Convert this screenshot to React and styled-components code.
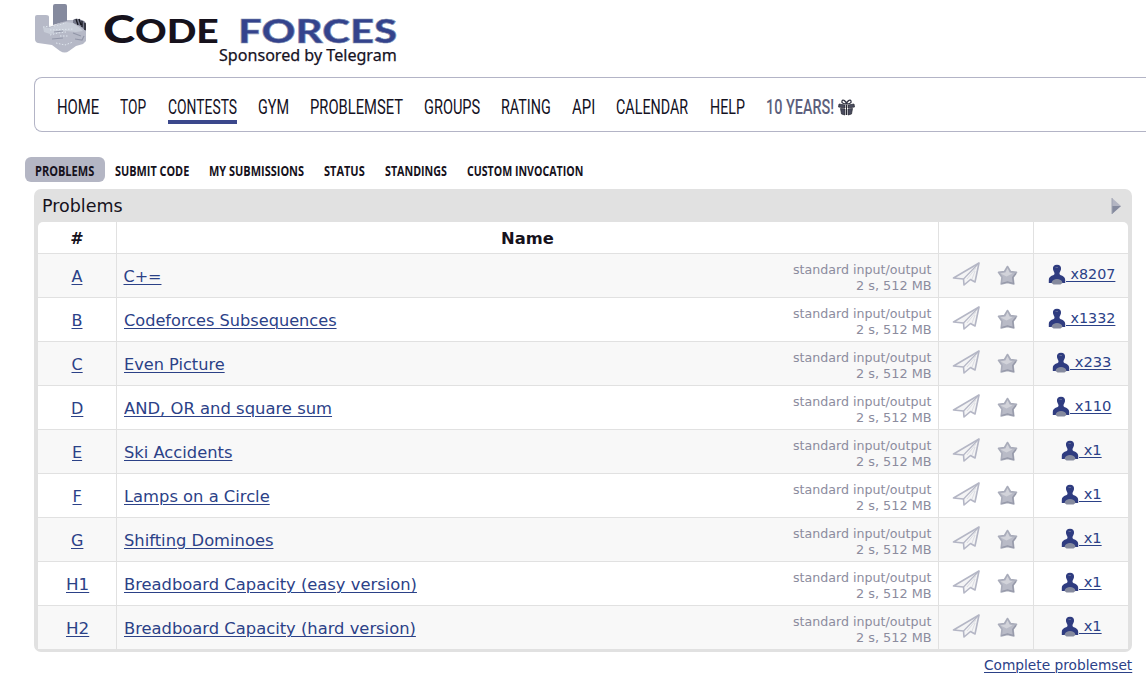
import React, { useLayoutEffect, useRef, useState } from "react";
import styled, { createGlobalStyle } from "styled-components";

const Global = createGlobalStyle`
  * { box-sizing: border-box; }
  body { margin: 0; background: #fff; color: #16121c; overflow: hidden;
    font-family: "DejaVu Sans", sans-serif; }
`;

const FitBox = styled.span`
  display: inline-block;
  white-space: pre;
  text-align: left;
  text-decoration: inherit;
  flex: none;
`;
const FitInner = styled.span`
  display: inline-block;
  text-decoration: inherit;
  transform-origin: 0 50%;
`;

/* Narrows or widens its text so that it takes exactly the given width. */
function Fit({ width, children }) {
  const ref = useRef(null);
  const [scale, setScale] = useState(1);
  useLayoutEffect(() => {
    setScale(width / ref.current.offsetWidth);
  }, [width]);
  return (
    <FitBox style={{ width }}>
      <FitInner ref={ref} style={{ transform: `scaleX(${scale})` }}>{children}</FitInner>
    </FitBox>
  );
}

const Page = styled.div`
  width: 1146px;
  height: 682px;
  overflow: hidden;
`;
const Header = styled.header`
  display: flex;
  height: 77px;
  padding: 3px 0 0 34px;
`;
const Brand = styled.div`
  width: 294px;
  margin-left: 16px;
`;
const Wordmark = styled.div`
  display: flex;
  align-items: baseline;
  height: 43px;
  padding-top: 9px;
  font: 900 33px/32px Lato, sans-serif;
`;
const Initial = styled.span`
  display: flex;
  font-size: 38px;
`;
const Forces = styled.span`
  margin-left: 19px;
  color: #34438c;
  -webkit-text-stroke: 0.6px #8592b4;
`;
const Sponsor = styled.div`
  display: flex;
  justify-content: flex-end;
  font: 17px/18px "Noto Sans", sans-serif;
  -webkit-text-stroke: 0.25px #16122c;
`;
const Nav = styled.nav`
  display: flex;
  align-items: flex-start;
  height: 55px;
  margin-left: 34px;
  padding: 14px 0 0 22px;
  border: 1px solid #b3b4c6;
  border-right: 0;
  border-radius: 8px 0 0 8px;
`;
const NavItem = styled.a`
  display: flex;
  align-items: center;
  height: 32px;
  margin-right: ${(p) => p.$gap}px;
  padding-top: 3px;
  border-bottom: 4px solid ${(p) => (p.$active ? "#3b488c" : "transparent")};
  color: ${(p) => (p.$muted ? "#5c5f7c" : "#14121f")};
  font: ${(p) => (p.$muted ? 500 : 400)} 19.5px/26px Roboto, sans-serif;
`;
const SubNav = styled.nav`
  display: flex;
  height: 25px;
  margin: 25px 0 0 25px;
`;
const SubItem = styled.a`
  height: 25px;
  padding: 0 10px;
  border-radius: 6px;
  background: ${(p) => (p.$active ? "#b4b6c4" : "transparent")};
  font: 700 15px/27px "Open Sans", sans-serif;
`;
const Panel = styled.section`
  width: 1098px;
  margin: 7px 0 0 34px;
  padding: 0 4px 2px;
  border-radius: 7px;
  background: #e1e1e1;
`;
const PanelTitle = styled.div`
  display: flex;
  align-items: center;
  justify-content: space-between;
  height: 33px;
  padding: 0 6px 0 4px;
  font-size: 17.5px;
`;
const Table = styled.div`
  overflow: hidden;
  border-radius: 5px 5px 0 0;
`;
const Row = styled.div`
  display: grid;
  grid-template-columns: 78px 821px 94px 94px;
  column-gap: 1px;
  height: ${(p) => (p.$head ? 31 : 43)}px;
  margin-bottom: 1px;
`;
const Cell = styled.div`
  display: flex;
  align-items: center;
  justify-content: ${(p) => p.$justify || "center"};
  padding: ${(p) => p.$pad || "0"};
  background: ${(p) => (p.$shade ? "#f8f8f8" : "#fff")};
  font-size: 16px;
  font-weight: ${(p) => (p.$bold ? 700 : 400)};
`;
const Link = styled.a`
  color: #2b4187;
  font-size: ${(p) => p.$size || 16}px;
  text-decoration: underline;
  text-decoration-thickness: 1px;
  text-underline-offset: 2px;
`;
const Limits = styled.div`
  display: flex;
  flex-direction: column;
  align-items: flex-end;
  color: #8c8c9e;
  font-size: 13px;
  line-height: 16px;
  padding-top: 3px;
`;
const Actions = styled.div`
  display: flex;
  align-items: center;
  gap: 16px;
  padding-right: 3px;
`;
const Solved = styled.div`
  display: flex;
  align-items: center;
  height: 40px;
  margin-bottom: 3px;
`;
const Icon = styled.svg`
  display: block;
  flex: none;
  margin: ${(p) => p.$m || "0"};
`;
const Footer = styled.footer`
  display: flex;
  justify-content: flex-end;
  padding: 4px 14px 0 0;
  line-height: 18px;
`;

const Hand = () => (
  <Icon width="53" height="51" viewBox="0 0 53 51">
    <path d="M1 14q0-2 2-2h9q3 0 3 2v10l6-2 12-5 9 0 7 4 3 6v11l-3 3-7 2-7 5q-4 3-9 0L18 42 4 40q-3-1-3-4z" fill="#b6b9c7" />
    <path d="M19 3q0-2 2-2h10q2 0 2 2v15l-4 1-10 3z" fill="#858a9e" />
    <path d="M39 17q2-2 6-1l5 2q2 1 2 4v6l-6-5-7-3z" fill="#747789" />
    <path d="M42 16l2 6m1-6l2 6m1-4v6m3-4v7" stroke="#171720" strokeWidth="1.3" />
    <path d="M9 24l6 1 8-3 9-3 7 1 7 5 3 3-7 1-10-1-9 2-7 1-6-2z" fill="#c8cdd8" />
    <path d="M20 29l9-1M18 36l11-1m10-5l8 3m-6 3l7 1 2-4" fill="none" stroke="#9296a8" strokeWidth="1.2" />
    <path d="M9 24l8-1m-1 9l8-2 8-1m-6 4h9m-13 7l9 2 8-3m-19-16l12-3m-16 7l24-1" fill="none" stroke="#dfe6ee" strokeDasharray="1.500 1.500" />
  </Icon>
);
const Gift = () => (
  <Icon width="17" height="17" viewBox="0 0 17 17" $m="0 0 1px 4px">
    <path d="M8.500 5C6 5 3 4 4 2s4 0 4.500 3C9 2 12 0 13 2s-2 3-4.500 3z" fill="none" stroke="#353746" strokeWidth="1.3" />
    <path d="M1 5l6 1v3L.5 8zM16 5l-6 1v3l6.500-1zM2.500 9.500L7 10v6l-3.500-1zM14.500 9.500L10 10v6l3.500-1z" fill="#4a4c5e" stroke="#252630" strokeWidth=".7" />
    <path d="M8.500 6v10" stroke="#252630" strokeWidth="1" />
  </Icon>
);
const Arrow = () => (
  <Icon width="11" height="18" viewBox="0 0 11 18">
    <path d="M1 1l9 8-9 8z" fill="#b3b5c2" />
    <path d="M1 9h9l-9 8z" fill="#858a9e" />
    <path d="M1 1v16" stroke="#a0a4b2" />
  </Icon>
);
const Plane = () => (
  <Icon width="29" height="26" viewBox="0 0 29 26" $m="0 0 3px">
    <path d="M1.500 17L27 2l-4 19-4.500-2.500-6.500 5.500-.5-6z" fill="#f4f4f5" stroke="#b4b6c5" strokeWidth="1.6" strokeLinejoin="round" />
    <path d="M27 2L11.500 18" fill="none" stroke="#b4b6c5" strokeWidth="1.1" />
    <path d="M24 7l-9 11m8-8l-3 8" fill="none" stroke="#dcdde3" strokeWidth="1" />
  </Icon>
);
const Star = () => (
  <Icon width="21" height="21" viewBox="0 0 21 21">
    <path d="M10.500 1.500l3 5 6 .8-3.500 5 .8 6.700-6.300-1.500L4.200 19l.8-6.700-3.500-5 6-.8z" fill="#b9bbc7" stroke="#a9acba" strokeWidth="1.6" strokeLinejoin="round" />
    <path d="M10.500 3l2 4.500 3 1-6 3-6-3 5-1z" fill="#d2d3da" />
    <path d="M19 8.500l-3.300 4 .8 6-6-1.700-6 1.700" fill="none" stroke="#9699a9" strokeWidth="1.2" />
  </Icon>
);
const Person = () => (
  <Icon width="18" height="21" viewBox="0 0 18 21" $m="1px 0 0">
    <path d="M9 .7c3 0 4.400 2 4 4.500-.3 2-1.700 2.800-1.500 4.800 1 2 5.700 1.500 5.700 6v3H.8v-3c0-4.500 4.700-4 5.700-6 .2-2-1.200-2.800-1.500-4.800C4.600 2.700 6 .7 9 .7z" fill="#2f3c80" />
    <path d="M3.500 19c.5-3 3-4 5.500-4s5 1 5.500 4l-2 1.500h-7z" fill="#858a9e" />
    <path d="M7.500 3.500h2.500" stroke="#5d6794" />
  </Icon>
);

const nav = [
  ["HOME", 42, 21], ["TOP", 26, 22], ["CONTESTS", 69, 21, true], ["GYM", 31, 21],
  ["PROBLEMSET", 93, 21], ["GROUPS", 56, 21], ["RATING", 50, 21], ["API", 23, 21],
  ["CALENDAR", 72, 22], ["HELP", 35, 21],
];
const sub = [
  ["PROBLEMS", 59.5, true], ["SUBMIT CODE", 74], ["MY SUBMISSIONS", 95],
  ["STATUS", 41], ["STANDINGS", 62], ["CUSTOM INVOCATION", 116],
];
const problems = [
  ["A", 11, "C+=", 38, "x8207", 49], ["B", 11, "Codeforces Subsequences", 213, "x1332", 49],
  ["C", 11, "Even Picture", 101, "x233", 41], ["D", 12, "AND, OR and square sum", 208, "x110", 41],
  ["E", 10, "Ski Accidents", 108, "x1", 23], ["F", 9, "Lamps on a Circle", 146, "x1", 23],
  ["G", 12, "Shifting Dominoes", 149, "x1", 23],
  ["H1", 23, "Breadboard Capacity (easy version)", 293, "x1", 23],
  ["H2", 23, "Breadboard Capacity (hard version)", 292, "x1", 23],
];

export default function App() {
  return (
    <Page>
      <Global />
      <Header>
        <Hand />
        <Brand>
          <Wordmark>
            <Initial><Fit width={32}>C</Fit></Initial>
            <Fit width={84}>ODE</Fit>
            <Forces><Fit width={159}>FORCES</Fit></Forces>
          </Wordmark>
          <Sponsor><Fit width={178}>Sponsored by Telegram</Fit></Sponsor>
        </Brand>
      </Header>
      <Nav>
        {nav.map(([label, width, gap, active]) => (
          <NavItem key={label} $gap={gap} $active={active}><Fit width={width}>{label}</Fit></NavItem>
        ))}
        <NavItem $gap={0} $muted><Fit width={68}>10 YEARS!</Fit><Gift /></NavItem>
      </Nav>
      <SubNav>
        {sub.map(([label, width, active]) => (
          <SubItem key={label} $active={active}><Fit width={width}>{label}</Fit></SubItem>
        ))}
      </SubNav>
      <Panel>
        <PanelTitle><Fit width={81}>Problems</Fit><Arrow /></PanelTitle>
        <Table>
          <Row $head>
            <Cell $bold $pad="2px 0 0">#</Cell>
            <Cell $bold $pad="2px 0 0"><Fit width={53}>Name</Fit></Cell>
            <Cell />
            <Cell />
          </Row>
          {problems.map(([id, idWidth, name, nameWidth, count, countWidth], i) => {
            const shade = i % 2 === 0;
            return (
              <Row key={id}>
                <Cell $shade={shade} $pad="2px 0 0"><Link><Fit width={idWidth}>{id}</Fit></Link></Cell>
                <Cell $shade={shade} $justify="space-between" $pad="2px 6px 0 6.5px">
                  <Link><Fit width={nameWidth}>{name}</Fit></Link>
                  <Limits>
                    <Fit width={139}>standard input/output</Fit>
                    <Fit width={76}>2 s, 512 MB</Fit>
                  </Limits>
                </Cell>
                <Cell $shade={shade}><Actions><Plane /><Star /></Actions></Cell>
                <Cell $shade={shade}>
                  <Solved>
                    <Person />
                    <Link $size={14}><Fit width={countWidth}>{"\u00a0" + count}</Fit></Link>
                  </Solved>
                </Cell>
              </Row>
            );
          })}
        </Table>
      </Panel>
      <Footer><Link $size={14}><Fit width={148}>Complete problemset</Fit></Link></Footer>
    </Page>
  );
}
